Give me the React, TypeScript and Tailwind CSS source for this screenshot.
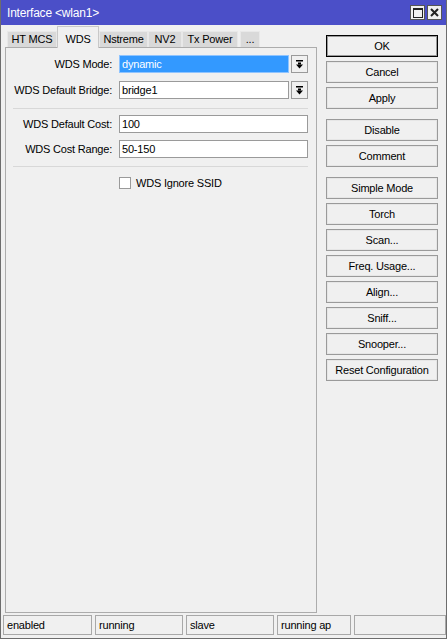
import React from "react";

const font = { fontFamily: '"Liberation Sans", Arial, sans-serif', letterSpacing: "-0.2px" };

function DropIcon() {
  return (
    <svg width="9" height="9" viewBox="0 0 9 9">
      <rect x="1" y="0" width="7" height="1.5" fill="#000" />
      <rect x="3" y="2.5" width="3" height="2" fill="#000" />
      <polygon points="1,4.5 8,4.5 4.5,8.5" fill="#000" />
    </svg>
  );
}

function Tab(props: { label: string; w: number; active?: boolean }) {
  const { label, w, active } = props;
  if (active) {
    return (
      <div
        className="h-[22px] -mb-px relative z-10 bg-[#f0f0f0] border border-b-0 border-[#c8c8c8] flex items-start justify-center pt-[4px] text-[11px] text-black"
        style={{ width: w }}
      >
        {label}
      </div>
    );
  }
  return (
    <div
      className="h-[16px] bg-[#d9d9d9] border border-b-0 border-[#e8e8e8] flex items-center justify-center text-[11px] text-black"
      style={{ width: w }}
    >
      {label}
    </div>
  );
}

function Field(props: { label: string; value: string; dropdown?: boolean; selected?: boolean }) {
  const { label, value, dropdown, selected } = props;
  return (
    <div className="flex flex-row items-center h-[18px]">
      <div className="w-[107px] text-right text-[11px] text-black pr-[1px]">{label}</div>
      <div className="ml-[6px] flex flex-row gap-[2px]">
        <div
          className={
            selected
              ? "h-[18px] w-[170px] border border-[#8fc4ff] bg-[#3399ff] text-white text-[11px] px-[2px] flex items-center"
              : dropdown
                ? "h-[18px] w-[170px] border border-[#9a9a9a] bg-white text-black text-[11px] px-[2px] flex items-center"
                : "h-[18px] w-[189px] border border-[#9a9a9a] bg-white text-black text-[11px] px-[2px] flex items-center"
          }
        >
          {value}
        </div>
        {dropdown && (
          <div className="h-[18px] w-[17px] border border-[#9a9a9a] bg-[#f0f0f0] flex items-center justify-center">
            <DropIcon />
          </div>
        )}
      </div>
    </div>
  );
}

function Btn(props: { label: string; primary?: boolean; className?: string }) {
  return (
    <div
      className={
        (props.primary
          ? "border border-black shadow-[inset_0_0_0_1px_#9a9a9a] "
          : "border border-[#9a9a9a] shadow-[inset_0_0_0_1px_#e6e6e6] ") +
        "h-[22px] w-[112px] bg-[#f0f0f0] flex items-center justify-center text-[11px] text-black " +
        (props.className ?? "")
      }
    >
      {props.label}
    </div>
  );
}

function StatusCell(props: { text: string; w: number }) {
  return (
    <div
      className="h-[20px] border border-[#a8a8a8] flex items-center px-[3px] text-[11px] text-black"
      style={{ width: props.w }}
    >
      {props.text}
    </div>
  );
}

export default function App() {
  return (
    <div
      className="w-[447px] h-[639px] bg-[#f0f0f0] flex flex-col overflow-hidden border-l border-r border-b border-[#6d6d6d]"
      style={font}
    >
      {/* title bar */}
      <div className="h-[25px] bg-[#4b4fc8] flex flex-row items-center pl-[6px] pr-[4px] shrink-0">
        <div className="text-white text-[12px] flex-1">Interface &lt;wlan1&gt;</div>
        <div className="flex flex-row gap-[2px]">
          <div className="w-[15px] h-[15px] bg-[#f0f0f0] border border-[#555] flex items-center justify-center">
            <svg width="10" height="10" viewBox="0 0 10 10">
              <rect x="0.5" y="0.5" width="9" height="9" fill="none" stroke="#222" strokeWidth="1" />
              <rect x="0" y="0" width="10" height="2" fill="#222" />
            </svg>
          </div>
          <div className="w-[15px] h-[15px] bg-[#f0f0f0] border border-[#555] flex items-center justify-center">
            <svg width="9" height="9" viewBox="0 0 9 9">
              <path d="M1 1 L8 8 M8 1 L1 8" stroke="#222" strokeWidth="2" />
            </svg>
          </div>
        </div>
      </div>

      {/* body */}
      <div className="flex flex-row h-[590px] shrink-0">
        <div className="pl-[4px] flex flex-col">
          <div className="h-[22px] flex flex-row items-end pl-[2px]">
            <Tab label="HT MCS" w={50} />
            <Tab label="WDS" w={42} active />
            <Tab label="Nstreme" w={49} />
            <Tab label="NV2" w={34} />
            <Tab label="Tx Power" w={56} />
            <div className="w-[2px]" />
            <Tab label="..." w={20} />
          </div>
          <div className="w-[312px] h-[566px] border border-[#acacac] flex flex-col pt-[7px]">
            <Field label="WDS Mode:" value="dynamic" dropdown selected />
            <div className="h-[8px]" />
            <Field label="WDS Default Bridge:" value="bridge1" dropdown />
            <div className="h-px bg-[#d8d8d8] mt-[9px] ml-[7px] mr-[8px]" />
            <div className="h-[6px]" />
            <Field label="WDS Default Cost:" value="100" />
            <div className="h-[7px]" />
            <Field label="WDS Cost Range:" value="50-150" />
            <div className="h-px bg-[#d8d8d8] mt-[8px] ml-[7px] mr-[8px]" />
            <div className="flex flex-row items-center mt-[8px] pl-[113px]">
              <div className="w-[12px] h-[12px] border border-[#9a9a9a] bg-white" />
              <div className="ml-[5px] text-[11px] text-black">WDS Ignore SSID</div>
            </div>
          </div>
        </div>

        <div className="ml-[9px] pt-[10px] flex flex-col">
          <Btn label="OK" primary />
          <Btn label="Cancel" className="mt-[4px]" />
          <Btn label="Apply" className="mt-[4px]" />
          <Btn label="Disable" className="mt-[10px]" />
          <Btn label="Comment" className="mt-[4px]" />
          <Btn label="Simple Mode" className="mt-[10px]" />
          <Btn label="Torch" className="mt-[4px]" />
          <Btn label="Scan..." className="mt-[4px]" />
          <Btn label="Freq. Usage..." className="mt-[4px]" />
          <Btn label="Align..." className="mt-[4px]" />
          <Btn label="Sniff..." className="mt-[4px]" />
          <Btn label="Snooper..." className="mt-[4px]" />
          <Btn label="Reset Configuration" className="mt-[4px]" />
        </div>
      </div>

      {/* status bar */}
      <div className="flex flex-row gap-[3px] pl-[2px] h-[20px] shrink-0">
        <StatusCell text="enabled" w={89} />
        <StatusCell text="running" w={88} />
        <StatusCell text="slave" w={88} />
        <StatusCell text="running ap" w={74} />
        <StatusCell text="" w={92} />
      </div>
    </div>
  );
}
